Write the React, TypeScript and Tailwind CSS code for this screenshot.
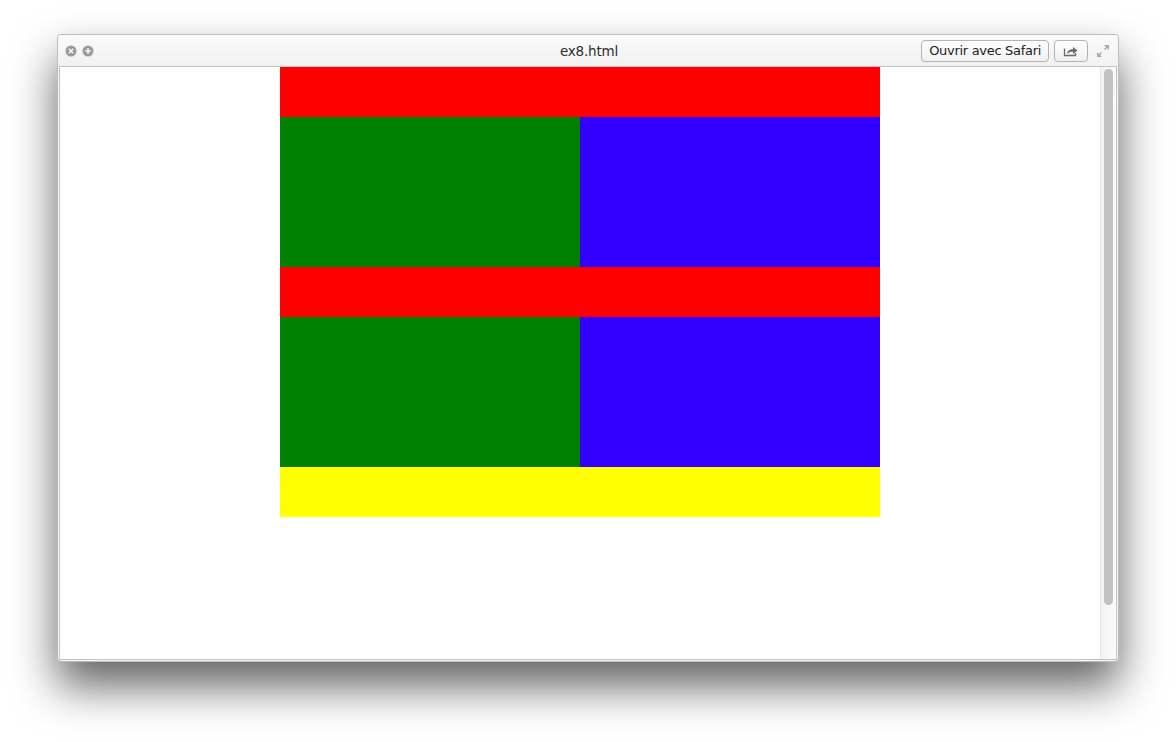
export default function App() {
  return (
    <div className="w-[1176px] h-[742px] bg-white pt-[34px] pl-[57px] font-['Liberation_Sans',sans-serif]">
      <div className="w-[1062px] h-[628px] flex flex-col bg-[#f4f4f4] rounded-[4px] border border-[#bdbdbd] shadow-[0_24px_45px_rgba(0,0,0,0.62)]">
        {/* title bar */}
        <div className="h-[31px] flex items-center relative bg-gradient-to-b from-[#fbfbfb] to-[#f1f1f1] rounded-t-[4px]">
          <div className="flex items-center gap-[5px] pl-[7px]">
            <svg width="12" height="12" viewBox="0 0 12 12">
              <circle cx="6" cy="6" r="5.5" fill="#9a9a9a" />
              <path d="M3.8 3.8 L8.2 8.2 M8.2 3.8 L3.8 8.2" stroke="#f4f4f4" strokeWidth="1.6" />
            </svg>
            <svg width="12" height="12" viewBox="0 0 12 12">
              <circle cx="6" cy="6" r="5.5" fill="#9a9a9a" />
              <path d="M6 3 V9 M3 6 H9" stroke="#f4f4f4" strokeWidth="1.6" />
            </svg>
          </div>
          <div className="absolute left-0 right-0 top-0 h-[31px] flex items-center justify-center pointer-events-none">
            <span className="text-[13.5px] text-[#2e2e2e] font-['DejaVu_Sans',sans-serif] tracking-[-0.2px] pl-[2px] pt-[1px]">ex8.html</span>
          </div>
          <div className="ml-auto flex items-center gap-[5px] pr-[5px]">
            <div className="h-[22px] px-[7px] flex items-center rounded-[4px] border border-[#b3b3b3] bg-gradient-to-b from-white to-[#f0f0f0] text-[13px] text-[#222] font-['DejaVu_Sans',sans-serif] tracking-[-0.3px]">
              Ouvrir avec Safari
            </div>
            <div className="h-[22px] w-[34px] flex items-center justify-center rounded-[4px] border border-[#b3b3b3] bg-gradient-to-b from-white to-[#f0f0f0]">
              <svg width="16" height="12" viewBox="0 0 16 12">
                <path d="M1.5 3.5 V10.5 H12.5 V8" fill="none" stroke="#6a6a6a" strokeWidth="1.3" />
                <path d="M4 9 C4.5 5.5 7 4.3 10 4.3 V2 L14.5 5.5 L10 9 V6.7 C7.5 6.7 5.5 7.3 4 9 Z" fill="#6a6a6a" />
              </svg>
            </div>
            <div className="w-[20px] flex items-center justify-center">
              <svg width="14" height="14" viewBox="0 0 14 14">
                <path d="M8 1 H13 V6 Z M1 8 V13 H6 Z" fill="#a8a8a8" />
                <path d="M11 3 L8.5 5.5 M3 11 L5.5 8.5" stroke="#a8a8a8" strokeWidth="1.4" />
              </svg>
            </div>
          </div>
        </div>
        {/* content */}
        <div className="flex-1 mx-[1px] mb-[1px] flex border border-[#c4c4c4] bg-white">
          <div className="flex-1 flex justify-center">
            <div className="w-[600px] flex flex-col">
              <div className="h-[50px] bg-[#ff0000]" />
              <div className="h-[150px] flex">
                <div className="w-[300px] bg-[#008000]" />
                <div className="flex-1 bg-[#3300ff]" />
              </div>
              <div className="h-[50px] bg-[#ff0000]" />
              <div className="h-[150px] flex">
                <div className="w-[300px] bg-[#008000]" />
                <div className="flex-1 bg-[#3300ff]" />
              </div>
              <div className="h-[50px] bg-[#ffff00]" />
            </div>
          </div>
          <div className="w-[16px] border-l border-[#e4e4e4] bg-gradient-to-r from-[#f3f3f3] to-[#fafafa] pt-[2px] px-[3px]">
            <div className="h-[536px] w-[9px] rounded-full bg-[#c2c2c2]" />
          </div>
        </div>
      </div>
    </div>
  );
}
